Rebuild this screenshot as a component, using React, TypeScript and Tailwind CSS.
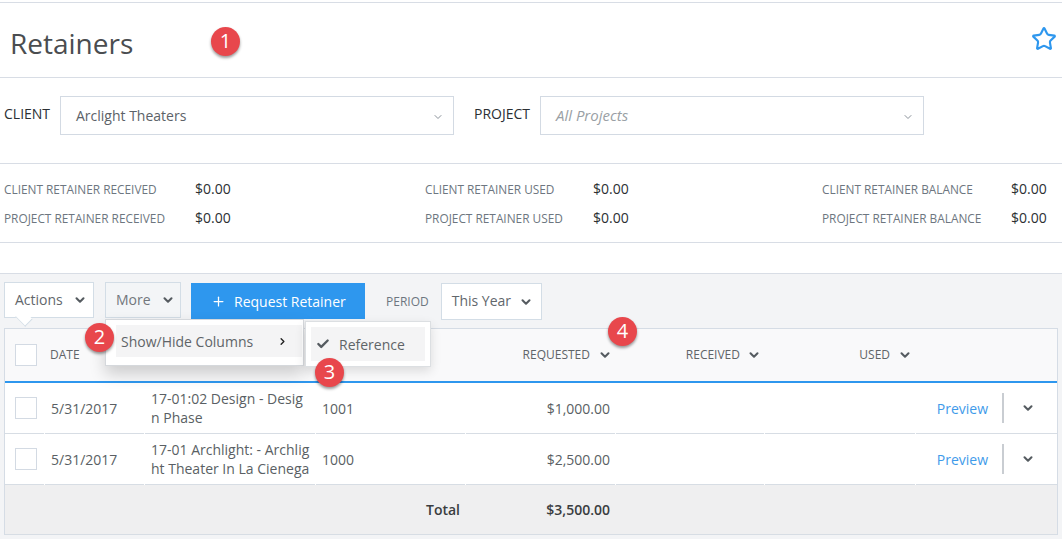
import React from 'react';
import { ChevronDown, ChevronRight, Plus, Star, Check } from 'lucide-react';

const COLS = 'grid grid-cols-[40px_100px_171px_150px_150px_149px_151px_1fr]';

function Marker({ n, className }: { n: number; className: string }) {
  return (
    <div className={`absolute z-30 w-[29px] h-[29px] rounded-full bg-[#e8474c] text-white text-[20px] leading-[27px] text-center shadow-[0_2px_3px_rgba(0,0,0,0.4)] ${className}`}>
      {n}
    </div>
  );
}

function Chev({ className = '' }: { className?: string }) {
  return <ChevronDown className={`w-[14px] h-[14px] text-[#555b60] ${className}`} strokeWidth={3.5} />;
}

function Stat({ label, value }: { label: string; value: string }) {
  return (
    <>
      <div className="text-[11.85px] leading-[18px] text-[#6d7680]">{label}</div>
      <div className="text-[14px] leading-[18px] text-[#2b2f33]">{value}</div>
    </>
  );
}

function Select({ value, width, italic }: { value: string; width: string; italic?: boolean }) {
  return (
    <div className={`h-[39px] ${width} border border-[#d3dae3] flex items-center justify-between pl-[15px] pr-[9px] ${italic ? 'text-[15px] italic text-[#9a9fa5]' : 'text-[14px] text-[#5c6268]'}`}>
      <span>{value}</span>
      <ChevronDown className="w-[12px] h-[12px] text-[#8b929a] mt-[2px]" strokeWidth={2} />
    </div>
  );
}

function Row({ date, name, line2, ref_, amount }: { date: string; name: string; line2: string; ref_: string; amount: string }) {
  const cell = 'h-[51px] border-b border-[#d7dde4] mr-px flex items-center';
  return (
    <div className={`${COLS} bg-white text-[14px] text-[#5a5f64]`}>
      <div className={`${cell} pl-[10px]`}>
        <div className="w-[22px] h-[22px] border border-[#d3dae3] bg-white" />
      </div>
      <div className={`${cell} pl-[6px]`}>{date}</div>
      <div className={`${cell} pl-[6px] leading-[19px] whitespace-nowrap`}>
        <div>{name}<br />{line2}</div>
      </div>
      <div className={`${cell} pl-[6px]`}>{ref_}</div>
      <div className={`${cell} justify-end pr-[5px]`}>{amount}</div>
      <div className={cell} />
      <div className={cell} />
      <div className="h-[51px] border-b border-[#d7dde4] flex items-center justify-end pr-[22px]">
        <span className="text-[#3f9bea]">Preview</span>
        <div className="w-[2px] h-[30px] bg-[#c9cdd2] ml-[14px] mr-[17px]" />
        <Chev />
      </div>
    </div>
  );
}

export default function App() {
  return (
    <div className="relative w-[1062px] h-[539px] overflow-hidden bg-white font-['Open_Sans',sans-serif]">
      <div className="h-[2px]" />
      {/* title */}
      <div className="h-[76px] border-y border-[#d8dde5] flex items-center justify-between pl-[10px] pr-[5px]">
        <h1 className="text-[28px] text-[#4a4d50] mt-[5px]">Retainers</h1>
        <Star className="w-[26px] h-[26px] text-[#2e97ee] -mt-[2px]" strokeWidth={2} />
      </div>

      {/* client / project filter */}
      <div className="h-[86px] border-b border-[#d8dde5] pl-[4px] pt-[18px] flex items-start">
        <span className="text-[14px] text-[#2b2f33] w-[56px] mt-[7px]">CLIENT</span>
        <Select value="Arclight Theaters" width="w-[394px]" />
        <span className="text-[14px] text-[#2b2f33] w-[66px] ml-[20px] mt-[7px]">PROJECT</span>
        <Select value="All Projects" width="w-[384px]" italic />
      </div>

      {/* retainer totals */}
      <div className="h-[79px] border-b border-[#d8dde5] pl-[4px] pt-[16px] grid grid-cols-[191px_230px_168px_229px_189px_1fr] auto-rows-[29px] items-start">
        <Stat label="CLIENT RETAINER RECEIVED" value="$0.00" />
        <Stat label="CLIENT RETAINER USED" value="$0.00" />
        <Stat label="CLIENT RETAINER BALANCE" value="$0.00" />
        <Stat label="PROJECT RETAINER RECEIVED" value="$0.00" />
        <Stat label="PROJECT RETAINER USED" value="$0.00" />
        <Stat label="PROJECT RETAINER BALANCE" value="$0.00" />
      </div>

      <div className="h-[31px] border-b border-[#d8dde5]" />

      {/* toolbar + table */}
      <div className="relative bg-[#f3f4f6] h-[265px] px-[4px] pt-[8px]">
        <div className="flex items-start h-[46px] text-[14px]">
          <div className="relative h-[36px] w-[90px] bg-white border border-[#d3dde6] flex items-center pl-[10px] pb-[2px] text-[#62676c]">
            Actions
            <Chev className="ml-[10px] mt-[2px]" />
            <div className="absolute left-[12px] -bottom-[8px] w-[14px] h-[14px] bg-white border-r border-b border-[#d3dde6] rotate-45 scale-y-75 z-10" />
          </div>
          <div className="h-[36px] w-[76px] ml-[11px] bg-[#f3f5f7] border border-[#d3dde6] flex items-center pl-[10px] pb-[2px] text-[#72777c]">
            More
            <Chev className="ml-[10px] mt-[2px]" />
          </div>
          <div className="h-[36px] w-[174px] ml-[10px] mt-px bg-[#2e97ee] text-white flex items-center pl-[20px]">
            <Plus className="w-[15px] h-[15px] mr-[8px]" strokeWidth={2} />
            Request Retainer
          </div>
          <span className="ml-[21px] mt-[11px] text-[12px] text-[#6d7680]">PERIOD</span>
          <div className="h-[37px] w-[101px] ml-[12px] mt-px bg-white border border-[#d3dde6] flex items-center pl-[10px] pb-[2px] text-[#62676c]">
            This Year
            <Chev className="ml-[8px] mt-[2px]" />
          </div>
        </div>

        <div className="border-x border-t border-[#d5dce5]">
          <div className={`${COLS} h-[54px] bg-[#f9f9fa] border-b-2 border-[#2e97ee] items-center text-[12px] text-[#5f6468]`}>
            <div className="pl-[10px]">
              <div className="w-[22px] h-[22px] border border-[#d3dae3] bg-white" />
            </div>
            <div className="pl-[5px]">DATE</div>
            <div />
            <div />
            <div className="flex items-center justify-end pr-[4px]">REQUESTED<Chev className="ml-[8px]" /></div>
            <div className="flex items-center justify-end pr-[4px]">RECEIVED<Chev className="ml-[7px]" /></div>
            <div className="flex items-center justify-end pr-[4px]">USED<Chev className="ml-[8px]" /></div>
            <div />
          </div>
          <Row date="5/31/2017" name="17-01:02 Design - Desig" line2="n Phase" ref_="1001" amount="$1,000.00" />
          <Row date="5/31/2017" name="17-01 Archlight: - Archlig" line2="ht Theater In La Cienega" ref_="1000" amount="$2,500.00" />
          <div className={`${COLS} h-[50px] bg-[#efeff0] border-b border-[#d7dde4] items-center text-[14px] font-semibold text-[#3a3d40]`}>
            <div />
            <div />
            <div />
            <div className="text-right pr-[6px]">Total</div>
            <div className="text-right pr-[6px]">$3,500.00</div>
          </div>
        </div>

        {/* open "More" menu */}
        <div className="absolute left-[105px] top-[45px] z-20 w-[199px] h-[47px] bg-white border border-[#d5d8dc] shadow-[0_8px_16px_rgba(0,0,0,0.18)] py-[5px] pl-[10px] pr-[1px]">
          <div className="h-[32px] bg-[#f4f4f5] flex items-center justify-between pl-[5px] pr-[14px] text-[14px] text-[#5f6468]">
            Show/Hide Columns
            <ChevronRight className="w-[11px] h-[11px] text-[#222]" strokeWidth={3} />
          </div>
        </div>
        <div className="absolute left-[305px] top-[47px] z-20 w-[126px] h-[46px] bg-white border border-[#dcdfe2] shadow-[0_4px_10px_rgba(0,0,0,0.12)] p-[5px]">
          <div className="h-[34px] bg-[#f4f4f5] flex items-center pl-[5px] text-[14px] text-[#5f6468]">
            <Check className="w-[14px] h-[14px] text-[#555b60] mr-[9px]" strokeWidth={4} />
            Reference
          </div>
        </div>
      </div>

      <Marker n={1} className="left-[211px] top-[27px]" />
      <Marker n={2} className="left-[85px] top-[323px]" />
      <Marker n={3} className="left-[315px] top-[358px]" />
      <Marker n={4} className="left-[608px] top-[317px]" />
    </div>
  );
}
